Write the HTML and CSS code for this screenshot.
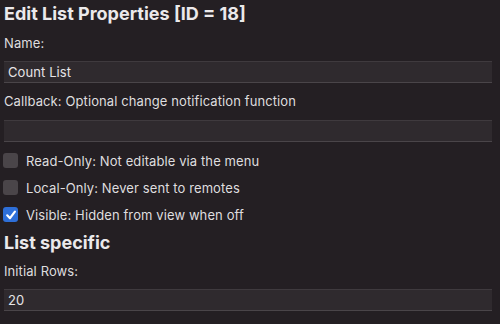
FILE: index.html
```html
<!DOCTYPE html>
<html>
<head>
<meta charset="utf-8">
<link rel="stylesheet" href="styles.css">
</head>
<body>
<div class="panel">
  <h1 class="title">Edit List Properties [ID = 18]</h1>
  <div class="label label-name">Name:</div>
  <div class="input">Count List</div>
  <div class="label label-cb">Callback: Optional change notification function</div>
  <div class="input"></div>
  <div class="checks">
    <div class="check"><span class="box"></span><span>Read-Only: Not editable via the menu</span></div>
    <div class="check"><span class="box"></span><span>Local-Only: Never sent to remotes</span></div>
    <div class="check"><span class="box on"><svg viewBox="0 0 14 14" width="14" height="14"><path d="M3.2 7.3 L6 10.2 L10.9 3.6" fill="none" stroke="#fff" stroke-width="2.2" stroke-linecap="round" stroke-linejoin="round"/></svg></span><span>Visible: Hidden from view when off</span></div>
  </div>
  <h2 class="subtitle">List specific</h2>
  <div class="label label-rows">Initial Rows:</div>
  <div class="input">20</div>
</div>
</body>
</html>
```
FILE: styles.css
```css
html, body {
  margin: 0;
  padding: 0;
  background: #241f23;
}
body {
  width: 500px;
  height: 324px;
  overflow: hidden;
  font-family: Inter, "Noto Sans", "Liberation Sans", sans-serif;
  color: #dfdddf;
  font-size: 13px;
  letter-spacing: 0.1px;
}
.panel {
  display: flex;
  flex-direction: column;
  padding: 0 8px 0 4px;
}
.title {
  margin: 0;
  height: 28px;
  line-height: 28px;
  font-size: 18px;
  font-weight: 700;
  letter-spacing: 0;
  color: #ebe9eb;
}
.subtitle {
  margin: 2px 0 0;
  height: 25px;
  line-height: 25px;
  font-size: 18px;
  font-weight: 700;
  letter-spacing: 0;
  color: #ebe9eb;
}
.label {
  height: 22px;
  line-height: 22px;
}
.label-name { margin-top: 4px; margin-bottom: 7px; }
.label-cb { margin-top: 7px; margin-bottom: 8px; }
.label-rows { margin-top: 5px; margin-bottom: 7px; }
.input {
  box-sizing: border-box;
  height: 22px;
  line-height: 20px;
  padding: 0 4px;
  background: #2f2a2e;
  border-top: 1px solid #3f3a3e;
  border-bottom: 1px solid #4a4549;
  color: #e6e4e6;
}
.checks {
  display: flex;
  flex-direction: column;
  margin-top: 5px;
}
.check {
  height: 27px;
  display: flex;
  align-items: center;
  gap: 8px;
}
.box {
  box-sizing: border-box;
  width: 15px;
  height: 15px;
  margin-left: -1px;
  border-radius: 3px;
  background: #4a4549;
  display: flex;
  align-items: center;
  justify-content: center;
}
.box.on {
  background: #2e6fd8;
}
```
